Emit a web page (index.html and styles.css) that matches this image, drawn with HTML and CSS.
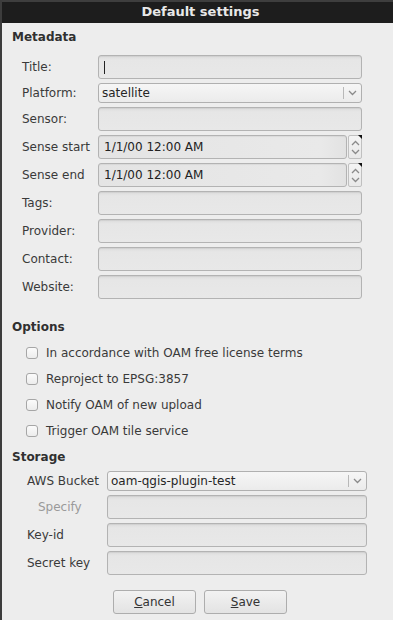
FILE: index.html
```html
<!DOCTYPE html>
<html lang="en">
<head>
  <meta charset="UTF-8" />
  <title>Default settings</title>
  <link rel="stylesheet" href="styles.css">
</head>
<body>
  <div class="window">
    <div class="titlebar">Default settings</div>

    <div class="content">
      <h3 class="group">Metadata</h3>
      <div class="fields meta">
        <label>Title:</label>
        <div class="field"><span class="caret"></span></div>

        <label>Platform:</label>
        <div class="combo">
          <span class="combo-text">satellite</span>
          <span class="combo-arrow">
            <svg width="9" height="6" viewBox="0 0 9 6"><path d="M1 1 L4.5 4.5 L8 1" fill="none" stroke="#8a8a8a" stroke-width="1.3"/></svg>
          </span>
        </div>

        <label>Sensor:</label>
        <div class="field"></div>

        <label>Sense start</label>
        <div class="datetime">
          <div class="field date"><span>1/1/00 12:00 AM</span></div>
          <div class="spin">
            <svg width="9" height="6" viewBox="0 0 9 6"><path d="M1 5 L4.5 1.5 L8 5" fill="none" stroke="#8a8a8a" stroke-width="1.3"/></svg>
            <svg width="9" height="6" viewBox="0 0 9 6"><path d="M1 1 L4.5 4.5 L8 1" fill="none" stroke="#8a8a8a" stroke-width="1.3"/></svg>
            <span class="corner"></span>
          </div>
        </div>

        <label>Sense end</label>
        <div class="datetime">
          <div class="field date"><span>1/1/00 12:00 AM</span></div>
          <div class="spin">
            <svg width="9" height="6" viewBox="0 0 9 6"><path d="M1 5 L4.5 1.5 L8 5" fill="none" stroke="#8a8a8a" stroke-width="1.3"/></svg>
            <svg width="9" height="6" viewBox="0 0 9 6"><path d="M1 1 L4.5 4.5 L8 1" fill="none" stroke="#8a8a8a" stroke-width="1.3"/></svg>
            <span class="corner"></span>
          </div>
        </div>

        <label>Tags:</label>
        <div class="field"></div>

        <label>Provider:</label>
        <div class="field"></div>

        <label>Contact:</label>
        <div class="field"></div>

        <label>Website:</label>
        <div class="field"></div>
      </div>

      <h3 class="group options-title">Options</h3>
      <div class="checks">
        <div class="check"><span class="box"></span>In accordance with OAM free license terms</div>
        <div class="check"><span class="box"></span>Reproject to EPSG:3857</div>
        <div class="check"><span class="box"></span>Notify OAM of new upload</div>
        <div class="check"><span class="box"></span>Trigger OAM tile service</div>
      </div>

      <h3 class="group storage-title">Storage</h3>
      <div class="fields storage">
        <label>AWS Bucket</label>
        <div class="combo">
          <span class="combo-text">oam-qgis-plugin-test</span>
          <span class="combo-arrow">
            <svg width="9" height="6" viewBox="0 0 9 6"><path d="M1 1 L4.5 4.5 L8 1" fill="none" stroke="#8a8a8a" stroke-width="1.3"/></svg>
          </span>
        </div>

        <label class="disabled">Specify</label>
        <div class="field"></div>

        <label>Key-id</label>
        <div class="field"></div>

        <label>Secret key</label>
        <div class="field"></div>
      </div>

      <div class="buttons">
        <button><u>C</u>ancel</button>
        <button><u>S</u>ave</button>
      </div>
    </div>
  </div>
</body>
</html>
```

FILE: styles.css
```css
html, body {
  margin: 0;
  padding: 0;
  background: #ededed;
}
body {
  font-family: "DejaVu Sans", sans-serif;
  font-size: 12px;
  color: #3a3a3a;
  height: 620px;
  overflow: hidden;
}
.window {
  height: 620px;
  border-left: 2px solid #3c3c3c;
  box-sizing: border-box;
}
.titlebar {
  height: 21px;
  border-top: 2px solid #3e3e3e;
  background: #1d1d1d;
  color: #e8e8e8;
  font-weight: bold;
  font-size: 13px;
  line-height: 20px;
  text-align: center;
  padding-left: 6px;
}
.content {
  padding: 0 0 0 10px;
}
h3.group {
  margin: 0;
  font-size: 12px;
  font-weight: bold;
  color: #303030;
  line-height: 16px;
  padding-top: 6px;
  height: 16px;
}
.fields {
  display: grid;
  row-gap: 4px;
  align-items: center;
}
.fields label {
  line-height: 16px;
}
.fields.meta {
  margin-top: 10px;
  margin-left: 10px;
  grid-template-columns: 76px 264px;
}
.fields.storage {
  margin-top: 6px;
  margin-left: 15px;
  grid-template-columns: 80px 260px;
}
.fields.storage label.disabled {
  color: #9a9a9a;
  padding-left: 11px;
}
.field {
  height: 24px;
  box-sizing: border-box;
  border: 1px solid #b3b3b3;
  border-radius: 3px;
  background: linear-gradient(#dcdcdc, #e6e6e6 4px, #e8e8e8);
  box-shadow: inset 0 1px 1px rgba(0, 0, 0, 0.06);
  display: flex;
  align-items: center;
  padding-left: 5px;
}
.caret {
  width: 1px;
  height: 13px;
  background: #222;
}
.combo {
  height: 20px;
  box-sizing: border-box;
  border: 1px solid #b0b0b0;
  border-radius: 3px;
  background: linear-gradient(#f6f6f6, #ebebeb);
  display: flex;
  align-items: center;
}
.combo-text {
  flex: 1;
  padding-left: 3px;
  color: #262626;
  line-height: 16px;
}
.combo-arrow {
  width: 16px;
  height: 12px;
  border-left: 1px solid #b8b8b8;
  display: flex;
  align-items: center;
  justify-content: center;
  margin-right: 1px;
}
.datetime {
  display: flex;
  height: 24px;
}
.field.date {
  flex: 1;
  height: 24px;
  color: #222;
  padding-left: 5px;
  background: linear-gradient(90deg, #e4e4e4, #e9e9e9 90%, #e2e2e2);
}
.spin {
  position: relative;
  width: 14px;
  margin-left: 1px;
  box-sizing: border-box;
  border: 1px solid #c0c0c0;
  border-radius: 2px;
  background: linear-gradient(#f4f4f4, #e9e9e9);
  display: flex;
  flex-direction: column;
  align-items: center;
  justify-content: space-around;
  padding: 2px 0;
}
.spin .corner {
  position: absolute;
  top: -1px;
  right: -1px;
  width: 0;
  height: 0;
  border-top: 4px solid #111;
  border-left: 4px solid transparent;
}
h3.options-title {
  padding-top: 20px;
}
.checks {
  margin-top: 5px;
  padding-left: 14px;
}
.check {
  height: 26px;
  display: flex;
  align-items: center;
  line-height: 16px;
  color: #3a3a3a;
}
.check .box {
  width: 12px;
  height: 12px;
  box-sizing: border-box;
  border: 1px solid #a6a6a6;
  border-radius: 3px;
  background: linear-gradient(#fbfbfb, #ececec);
  margin-right: 8px;
}
h3.storage-title {
  padding-top: 5px;
}
.buttons {
  display: flex;
  justify-content: center;
  gap: 8px;
  margin-top: 15px;
  padding-right: 5px;
}
.buttons button {
  width: 83px;
  height: 24px;
  font-family: "DejaVu Sans", sans-serif;
  font-size: 12px;
  color: #333;
  border: 1px solid #adadad;
  border-radius: 3px;
  background: linear-gradient(#f2f2f2, #e3e3e3);
  padding: 0;
}
```
